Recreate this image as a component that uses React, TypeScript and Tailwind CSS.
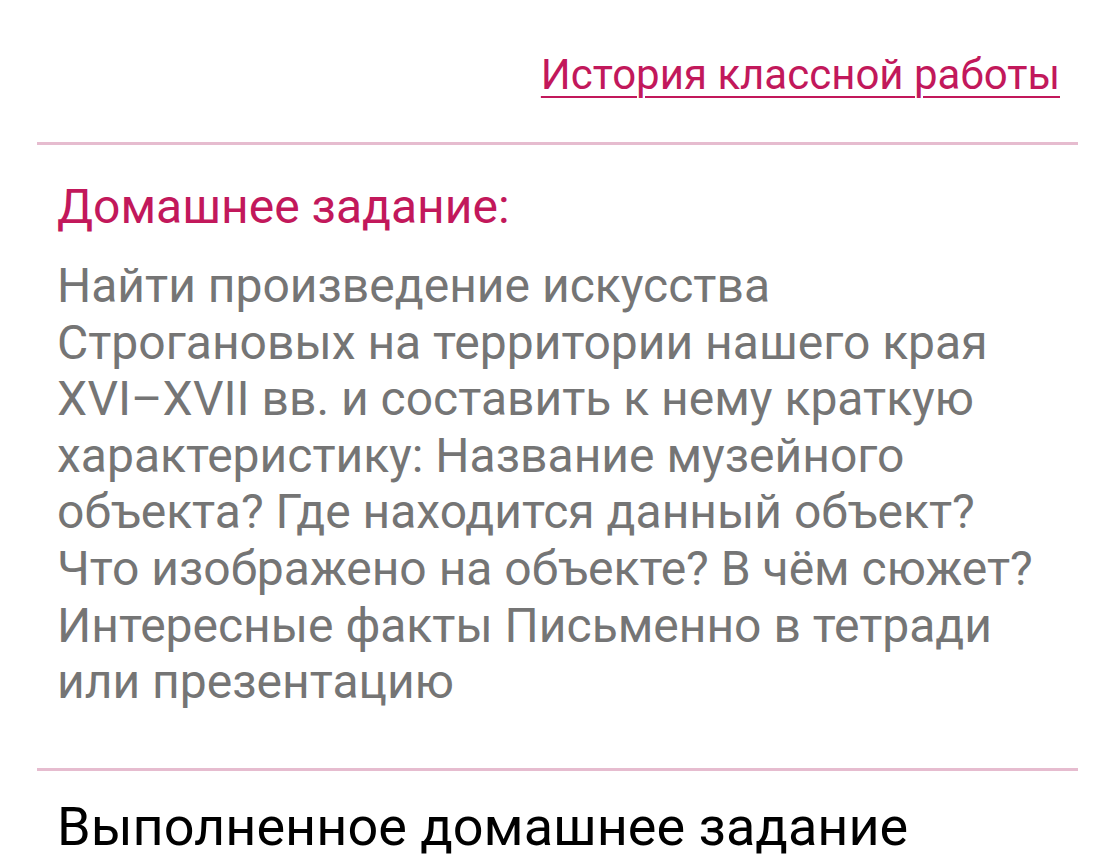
import React from "react";

const lines = [
  "Найти произведение искусства",
  "Строгановых на территории нашего края",
  "XVI–XVII вв. и составить к нему краткую",
  "характеристику: Название музейного",
  "объекта? Где находится данный объект?",
  "Что изображено на объекте? В чём сюжет?",
  "Интересные факты Письменно в тетради",
  "или презентацию",
];

export default function App() {
  return (
    <div className="w-[1108px] h-[862px] bg-white overflow-hidden" style={{ fontFamily: "Roboto, 'Noto Sans', sans-serif" }}>
      <div className="ml-[37px] mr-[30px]">
        <div className="flex justify-end pt-[50px] pb-[42px] pr-[18px]">
          <a href="#" className="text-[42px] leading-[50px] text-[#c2185b] underline decoration-2 underline-offset-[7px] whitespace-nowrap">
            История классной работы
          </a>
        </div>
        <div className="h-[3px] bg-[#e6bccf]" />
        <div className="pl-[20px] pr-[10px] pt-[34px] pb-[57px]">
          <div className="text-[48px] leading-[56px] text-[#c2185b] whitespace-nowrap">Домашнее задание:</div>
          <div className="mt-[23px] text-[48px] leading-[56.6px] text-[#757575] whitespace-nowrap">
            {lines.map((l) => (
              <div key={l}>{l}</div>
            ))}
          </div>
        </div>
        <div className="h-[3px] bg-[#e6bccf]" />
        <div className="pl-[20px] pt-[26px]">
          <div className="text-[54px] leading-[60px] text-black whitespace-nowrap">Выполненное домашнее задание</div>
        </div>
      </div>
    </div>
  );
}
